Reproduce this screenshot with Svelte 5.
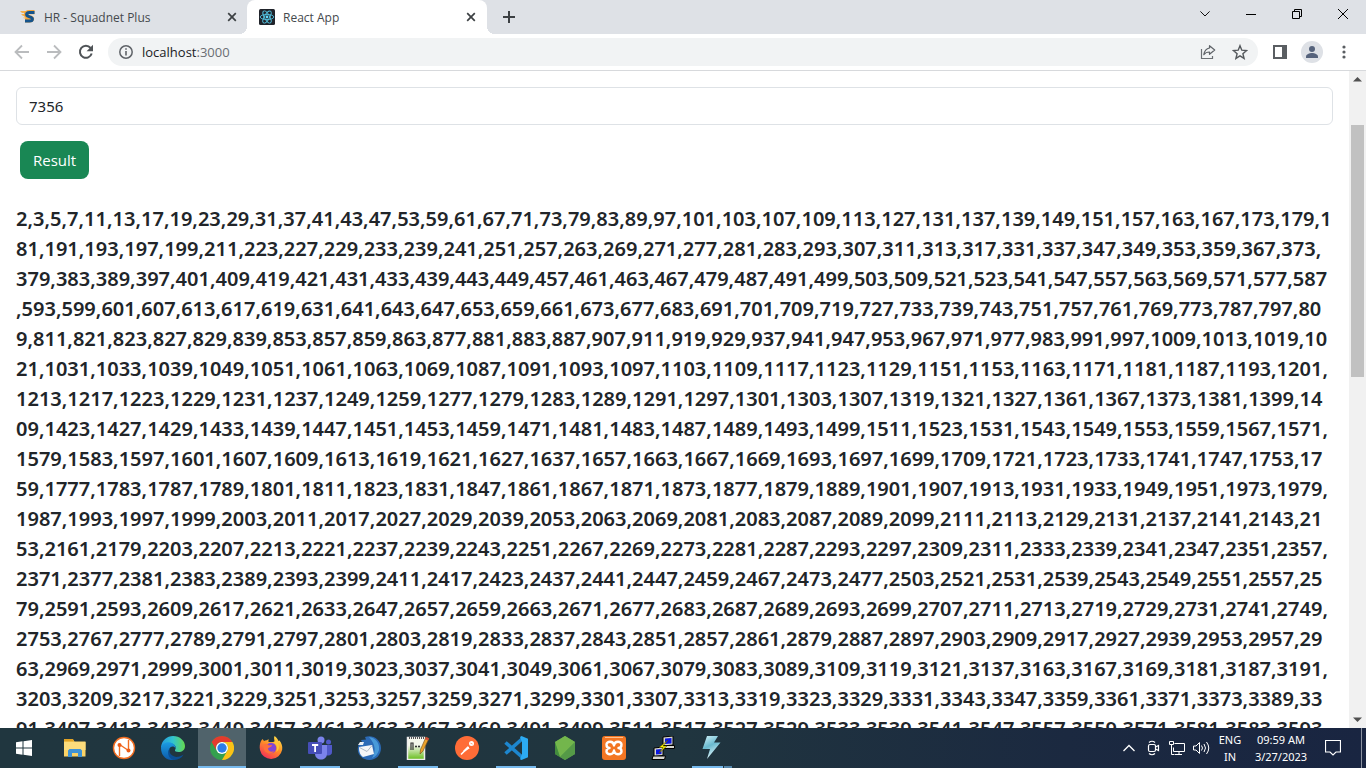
<script>
  let value = $state('7356');
  let limit = $state(7356);
  const pageSize = 503;

  function primesUpTo(max) {
    const found = [];
    for (let n = 2; n <= max; n++) {
      let prime = true;
      for (const p of found) {
        if (p * p > n) break;
        if (n % p === 0) {
          prime = false;
          break;
        }
      }
      if (prime) found.push(n);
    }
    return found;
  }

  const result = $derived(primesUpTo(limit).slice(0, pageSize).join(','));

  function submit(event) {
    event.preventDefault();
    limit = Number(value) || 0;
  }
</script>

<div class="desktop">
  <header class="tabs">
    <div class="tab">
      <svg width="16" height="16" viewBox="0 0 16 16">
        <path d="M0 2h8L6 4H2zM1 5h4v2H3z" fill="#f5b04c" />
        <path d="M3 8h3v2H4z" fill="#f7cf90" />
        <path d="M14.5 3.2H9.2C7 3.2 6 4.3 6 5.8c0 3.2 6 1.8 6 4 0 1.2-1.3 1.5-2.6 1.500H5" fill="none" stroke="#f2a33a" stroke-width="4.2" />
        <path d="M14.5 3.5H9.4C7.4 3.5 6.6 4.4 6.6 5.6c0 2.8 5.8 1.7 5.8 4.3 0 1.5-1.4 2-3 2H5" fill="none" stroke="#15548c" stroke-width="3" />
      </svg>
      <span class="title">HR - Squadnet Plus</span>
      <button class="tab-close" aria-label="Close tab">
        <svg width="10" height="10" viewBox="0 0 10 10"><path d="M1.2 1.2l7.6 7.6M8.8 1.2L1.2 8.8" stroke="#3c4043" stroke-width="1.7" /></svg>
      </button>
    </div>
    <div class="tab active">
      <svg width="16" height="16" viewBox="0 0 16 16">
        <rect width="16" height="16" rx="1.5" fill="#20232a" />
        <g fill="none" stroke="#53c1de" stroke-width=".9">
          <ellipse cx="8" cy="8" rx="6.8" ry="2.6" />
          <ellipse cx="8" cy="8" rx="6.8" ry="2.6" transform="rotate(60 8 8)" />
          <ellipse cx="8" cy="8" rx="6.8" ry="2.6" transform="rotate(120 8 8)" />
        </g>
        <circle cx="8" cy="8" r="1.4" fill="#61dafb" />
      </svg>
      <span class="title">React App</span>
      <button class="tab-close" aria-label="Close tab">
        <svg width="10" height="10" viewBox="0 0 10 10"><path d="M1.2 1.2l7.6 7.6M8.8 1.2L1.2 8.8" stroke="#3c4043" stroke-width="1.7" /></svg>
      </button>
    </div>
    <button class="new-tab" aria-label="New tab">
      <svg width="12" height="12" viewBox="0 0 12 12"><path d="M6 0v12M0 6h12" stroke="#3c4043" stroke-width="2" /></svg>
    </button>
    <div class="window-controls">
      <button aria-label="Search tabs">
        <svg width="10" height="6" viewBox="0 0 10 6"><path d="M.4.4L5 5 9.600.4" fill="none" stroke="#111" /></svg>
      </button>
      <button aria-label="Minimize">
        <svg width="10" height="10" viewBox="0 0 10 10"><path d="M0 5.500h10" stroke="#000" /></svg>
      </button>
      <button aria-label="Restore">
        <svg width="10" height="10" viewBox="0 0 10 10"><path d="M.5 2.500h7v7h-7zM2.500 2.500v-2h7v7h-2" fill="none" stroke="#000" /></svg>
      </button>
      <button aria-label="Close">
        <svg width="10" height="10" viewBox="0 0 10 10"><path d="M0 0l10 10M10 0L0 10" stroke="#000" /></svg>
      </button>
    </div>
  </header>

  <nav class="toolbar">
    <button class="tool" aria-label="Back">
      <svg width="16" height="16" viewBox="0 0 16 16"><path d="M15 8H2M8 1.500L1.500 8 8 14.500" fill="none" stroke="#babcbe" stroke-width="1.8" /></svg>
    </button>
    <button class="tool" aria-label="Forward">
      <svg width="16" height="16" viewBox="0 0 16 16"><path d="M1 8h13M8 1.500L14.500 8 8 14.500" fill="none" stroke="#babcbe" stroke-width="1.8" /></svg>
    </button>
    <button class="tool" aria-label="Reload">
      <svg width="16" height="16" viewBox="0 0 16 16">
        <path d="M13.700 9.500A6 6 0 1 1 12.600 4" fill="none" stroke="#4f5357" stroke-width="2" />
        <path d="M15 .8v6.400H8.600z" fill="#4f5357" />
      </svg>
    </button>
    <div class="omnibox">
      <svg width="14" height="14" viewBox="0 0 14 14">
        <circle cx="7" cy="7" r="6.200" fill="none" stroke="#5f6368" stroke-width="1.500" />
        <path d="M7 6v4.500M7 3.200v1.600" stroke="#5f6368" stroke-width="1.600" />
      </svg>
      <span class="address">localhost<span class="port">:3000</span></span>
      <button class="tool" aria-label="Share">
        <svg width="16" height="16" viewBox="0 0 16 16">
          <path d="M1.500 5v9.500h11V12" fill="none" stroke="#6b6f73" stroke-width="1.200" />
          <path d="M9.500 1.700L14.700 6l-5.200 4.300V8C7 8 5.200 8.700 3.800 10.700 4.300 7.500 6 4.600 9.500 4z" fill="none" stroke="#5f6368" stroke-width="1.200" stroke-linejoin="round" />
        </svg>
      </button>
      <button class="tool" aria-label="Bookmark this tab">
        <svg width="16" height="16" viewBox="0 0 16 16"><path d="M8 1.700l1.800 4.500 4.800.4-3.700 3.100 1.200 4.700L8 11.900l-4.100 2.500 1.200-4.700-3.700-3.100 4.800-.4z" fill="none" stroke="#54585c" stroke-width="1.400" /></svg>
      </button>
    </div>
    <button class="tool" aria-label="Side panel">
      <svg width="14" height="14" viewBox="0 0 14 14"><path d="M0 0h14v14H0zM2 2v10h7V2z" fill="#5a5e62" fill-rule="evenodd" /></svg>
    </button>
    <button class="tool" aria-label="Profile">
      <svg width="22" height="22" viewBox="0 0 22 22">
        <circle cx="11" cy="11" r="11" fill="#dee1e6" />
        <circle cx="11" cy="8" r="3" fill="#56637c" />
        <path d="M5 17v-1.500C5 13.200 8.500 12 11 12s6 1.200 6 3.500V17z" fill="#56637c" />
      </svg>
    </button>
    <button class="tool" aria-label="Menu">
      <svg width="4" height="14" viewBox="0 0 4 14" fill="#5a5e62"><circle cx="2" cy="2" r="1.600" /><circle cx="2" cy="7" r="1.600" /><circle cx="2" cy="12" r="1.600" /></svg>
    </button>
  </nav>

  <div class="viewport">
    <main>
      <form onsubmit={submit}>
        <input type="text" aria-label="Number" bind:value />
        <button class="result" type="submit">Result</button>
      </form>
      <p class="primes">{result}</p>
    </main>
    <div class="scrollbar">
      <svg width="9" height="5" viewBox="0 0 9 5"><path d="M0 4.500L4.500 0 9 4.500z" fill="#505050" /></svg>
      <div class="track"><div class="thumb"></div></div>
      <svg width="9" height="5" viewBox="0 0 9 5"><path d="M0 .5L4.500 5 9 .5z" fill="#505050" /></svg>
    </div>
  </div>

  <footer class="taskbar">
    <button class="start" aria-label="Start">
      <svg width="16" height="16" viewBox="0 0 16 16" fill="#fff"><path d="M0 2.200L6.500 1.300v6.200H0zM7.500 1.200L16 0v7.500H7.500zM0 8.500h6.500v6.200L0 13.800zM7.500 8.500H16V16l-8.500-1.200z" /></svg>
    </button>
    <div class="apps">
      <button aria-label="File Explorer">
        <svg width="24" height="24" viewBox="0 0 24 24">
          <path d="M1 3.500h9l1.500 2H22.500v15H1z" fill="#fbd366" />
          <path d="M1 3h9l1 2.500H1z" fill="#e2a325" />
          <path d="M1 6h21.500v8H1z" fill="#fcdc7c" />
          <path d="M5 21v-6.500L6.500 13h11l1.500 1.500V21h-4v-4H9v4z" fill="#3f93d5" />
        </svg>
      </button>
      <button aria-label="Nox">
        <svg width="24" height="24" viewBox="0 0 24 24">
          <circle cx="12" cy="12" r="10.500" fill="#fff" stroke="#f26d21" stroke-width="1.400" />
          <path d="M7.500 20V8.500l9 6V4" fill="none" stroke="#f26d21" stroke-width="1.400" />
          <circle cx="7.500" cy="9" r="2" fill="#ed5b18" /><circle cx="16.500" cy="14.500" r="2" fill="#ed5b18" />
        </svg>
      </button>
      <button aria-label="Edge">
        <svg width="24" height="24" viewBox="0 0 24 24">
          <defs>
            <linearGradient id="edge-top"><stop offset="0" stop-color="#239adf" /><stop offset=".5" stop-color="#32c4cf" /><stop offset="1" stop-color="#65d94e" /></linearGradient>
            <linearGradient id="edge-left" x2="0" y2="1"><stop stop-color="#1b9ce3" /><stop offset="1" stop-color="#0d59a8" /></linearGradient>
          </defs>
          <path d="M0 11C1 4 6 0 12 0c7 0 12 5 12 10 0 4-3 6-6.500 6-2.500 0-4-1-3.500-2 2-2.500 0-6-4-6.500C5.500 7 2 8.500 0 12z" fill="url(#edge-top)" />
          <path d="M0 12c.5-3.500 4-6 8-5.700 4.500.4 7 3.500 6.500 6.200C13 9.500 9 10 8 14c-1 4 2 8.500 6 9.800C6 25.500 0 20 0 12z" fill="url(#edge-left)" />
          <path d="M9 12c-2 6 3 9.500 8 8.800 2-.3 4-1.300 5.500-2.300-2 4-6 5.700-9.500 5.400C7 22.500 5.500 15.500 9 12z" fill="#0b4e93" />
        </svg>
      </button>
      <button class="focused" aria-label="Chrome">
        <svg width="24" height="24" viewBox="0 0 24 24">
          <circle cx="12" cy="12" r="12" fill="#34a04e" />
          <path d="M12 0a12 12 0 0 1 10.400 6H12a6 6 0 0 0-5.200 9L1.600 6A12 12 0 0 1 12 0z" fill="#e33b2e" />
          <path d="M22.400 6A12 12 0 0 1 12 24l5.200-9A6 6 0 0 0 12 6z" fill="#fbc116" />
          <circle cx="12" cy="12" r="6" fill="#fff" /><circle cx="12" cy="12" r="4.700" fill="#2b7de9" />
        </svg>
      </button>
      <button aria-label="Firefox">
        <svg width="24" height="24" viewBox="0 0 24 24">
          <defs><linearGradient id="fox" x1=".8" y1="0" x2=".2" y2="1"><stop stop-color="#ffe34a" /><stop offset=".45" stop-color="#ff9126" /><stop offset="1" stop-color="#f5275c" /></linearGradient></defs>
          <path d="M2 5l1.500-2L5 5c1-.6 2-.8 3-.7L9.500 3v3h6C15.500 3.500 14.500 2 15.500 0c2 1 3 3 4 5l1-.5c2 2.500 3.200 5.500 2.700 9A11.300 11.300 0 0 1 1 14C.3 10.500.8 7.500 2 5z" fill="url(#fox)" />
          <circle cx="12" cy="12" r="5.300" fill="#8345d5" />
          <path d="M4 9c2-2 4-1.500 6 .5L13 9c0 2-3 2.200-4 3.500 0 3 4 4 6 2.500-1 4-9 3-10-2z" fill="#ff7139" />
          <path d="M14 6c4 2 5 6 3 10 4-2 4-8 0-11z" fill="#ffc636" />
        </svg>
      </button>
      <button class="running" aria-label="Teams">
        <svg width="24" height="24" viewBox="0 0 24 24">
          <circle cx="13" cy="4" r="3.500" fill="#7b83eb" /><circle cx="20.500" cy="6" r="2.500" fill="#5059c9" />
          <path d="M17 9h7v7c0 3-3 4.500-6 3z" fill="#5059c9" />
          <path d="M7 9h12v8.500c0 8-12 8-12 0z" fill="#7b83eb" />
          <rect y="6" width="14" height="12" rx="1" fill="#464eb8" />
          <path d="M4 9h6.200M7.100 9v7" stroke="#fff" stroke-width="1.800" />
        </svg>
      </button>
      <button aria-label="Thunderbird">
        <svg width="24" height="24" viewBox="0 0 24 24">
          <path d="M8 1c7-3 16 2 16 11 0 7-5 12-11.500 12C5 24-.5 18 1 11c.5-3 2.500-4 4-5L4 4l5-.5z" fill="#2b6ab6" />
          <path d="M12 1c6 1 11 5 10 13-1 4-4 7-7 8 4-6 4-13-3-21z" fill="#499ad9" />
          <path d="M2 11l13-2 2 9-11 3C3 19 2 16 2 11z" fill="#f4f5f7" />
          <path d="M2.500 11.500l7.500 4 5-6" fill="none" stroke="#aeb8c4" />
          <path d="M1 9l2-3h4L6 9z" fill="#e9eef4" />
        </svg>
      </button>
      <button class="running" aria-label="Notepad++">
        <svg width="24" height="24" viewBox="0 0 24 24">
          <defs><linearGradient id="note" x2="0" y2="1"><stop offset=".35" stop-color="#f4f7ec" /><stop offset="1" stop-color="#66bd1b" /></linearGradient></defs>
          <path d="M1.500 1.500h17v22h-17z" fill="url(#note)" stroke="#ececec" stroke-width="1.500" />
          <path d="M3 2h15" stroke="#555" stroke-width="2" stroke-dasharray="1 1" />
          <path d="M5 14V7h2v7M9 10.500h2M12 10.500h2M10 9.500v2M13 9.500v2" fill="none" stroke="#333" stroke-width="1.200" />
          <path d="M20 1l3 1.500L17 15l-3 3 .5-4.500z" fill="#e9a22c" stroke="#754b18" stroke-width=".6" />
          <path d="M20 1l3 1.500-1 2-3-1.500z" fill="#cf4b3f" />
        </svg>
      </button>
      <button aria-label="Postman">
        <svg width="24" height="24" viewBox="0 0 24 24">
          <circle cx="12" cy="12" r="12" fill="#ff6c37" />
          <path d="M6 18.500l7-7" stroke="#fff" stroke-width="1.600" /><path d="M8 15l5-5 2 2-5 3.500z" fill="#fff" />
          <path d="M13.500 10.500l2 2" stroke="#ff6c37" /><circle cx="16.500" cy="7.500" r="2.500" fill="#fff" /><path d="M15.500 7.200l2 .8" stroke="#ff9b77" />
        </svg>
      </button>
      <button class="running" aria-label="Visual Studio Code">
        <svg width="24" height="24" viewBox="0 0 24 24">
          <path d="M1.500 6.500L18 21M1.500 17.500L18 3" stroke="#1d87cf" stroke-width="3.600" />
          <path d="M17.500 0L24 2.700v18.600L17.500 24l-1.500-.8L18 18V6l-2-5z" fill="#2cabf3" />
        </svg>
      </button>
      <button aria-label="Node.js">
        <svg width="24" height="24" viewBox="0 0 24 24">
          <path d="M12 0l10 6v12l-10 6L2 18V6z" fill="#5da548" />
          <path d="M12 0L2 6l5 15L22 6z" fill="#73b64c" /><path d="M2 6l5 15-5-3z" fill="#438c3e" /><path d="M22 6v12l-10 6-5-3z" fill="#559a47" />
        </svg>
      </button>
      <button aria-label="XAMPP">
        <svg width="24" height="24" viewBox="0 0 24 24">
          <rect width="24" height="24" rx="3" fill="#f37623" /><path d="M3 1.500h18" stroke="#ffc08c" />
          <path d="M12 9.500C11.500 4.500 4.500 5 4.500 8.500c0 2 1 3.500 3 3.500-2 0-3 1.500-3 3.500 0 3.500 7 4 7.500-1 .5 5 7.500 4.500 7.500 1 0-2-1-3.500-3-3.500 2 0 3-1.500 3-3.500 0-3.500-7-4-7.500 1z" fill="none" stroke="#fff" stroke-width="2.400" stroke-linejoin="round" />
        </svg>
      </button>
      <button aria-label="PuTTY">
        <svg width="24" height="24" viewBox="0 0 24 24">
          <g stroke="#000">
            <path d="M12 1l10-1v9l-10 1z" fill="#d8d8d0" /><path d="M14 2.500l6.500-.5v5.500l-6.500.5z" fill="#0b16e0" stroke="none" /><path d="M11 9.500h12.500v3H10.500z" fill="#d8d8d0" />
            <path d="M3 12l9-1v8.500l-9 1z" fill="#d8d8d0" /><path d="M5 13.500l5.500-.5v5l-5.500.5z" fill="#0b16e0" stroke="none" /><path d="M2 20h12.500l-1 3.500H1z" fill="#d8d8d0" />
          </g>
          <path d="M17 4l-9 7.500h4L8 17l8-7h-4z" fill="#f9f200" stroke="#4c4800" stroke-width=".5" />
        </svg>
      </button>
      <button class="running stacked" aria-label="Terminal">
        <svg width="24" height="24" viewBox="0 0 24 24">
          <defs><linearGradient id="bolt" x2=".4" y2="1"><stop stop-color="#d2f3fa" /><stop offset=".5" stop-color="#69b9cf" /><stop offset="1" stop-color="#dff6fb" /></linearGradient></defs>
          <path d="M7 0h11L14 6.500h6.500L7 23l3-10H2.500z" fill="url(#bolt)" />
        </svg>
      </button>
    </div>
    <div class="tray">
      <button aria-label="Show hidden icons">
        <svg width="12" height="8" viewBox="0 0 12 8"><path d="M.5 7L6 1.500 11.500 7" fill="none" stroke="#fff" stroke-width="1.300" /></svg>
      </button>
      <button aria-label="Meet Now">
        <svg width="14" height="16" viewBox="0 0 14 16" fill="none" stroke="#fff" stroke-width="1.200"><rect x="2.500" y="4.500" width="7" height="7" rx="1.500" /><path d="M9.500 7l3-1.500v5l-3-1.500M3 2.500Q6 0 9 2.500M3 13.500Q6 16 9 13.500" /></svg>
      </button>
      <button aria-label="Network">
        <svg width="16" height="14" viewBox="0 0 16 14" fill="none" stroke="#fff"><path d="M5.500 2.500h10v8h-11v-4M10 10.500v3M6 13.500h7M.5.500h4v3h-4zM2.500 3.500v10h3" /></svg>
      </button>
      <button aria-label="Volume">
        <svg width="17" height="14" viewBox="0 0 17 14" fill="none" stroke="#fff"><path d="M.5 5h2.500L6.500 1.500v11L3 9H.5zM8.500 4.500q2 2.500 0 5M11 3q3 4 0 8M13.500 1q4.500 6 0 12" /></svg>
      </button>
      <div class="language"><span>ENG</span><span>IN</span></div>
      <time datetime="2023-03-27T09:59"><span>09:59 AM</span><span>3/27/2023</span></time>
      <button class="notices" aria-label="Notifications">
        <svg width="16" height="16" viewBox="0 0 16 16"><path d="M.5.500h15v11.500H11L8 15l-3-3H.5z" fill="none" stroke="#fff" stroke-width="1.200" /></svg>
      </button>
      <span class="peek"></span>
    </div>
  </footer>
</div>

<style>
  :global(body) {
    margin: 0;
    overflow: hidden;
  }
  .desktop {
    display: flex;
    flex-direction: column;
    height: 100vh;
    background: #fff;
    color: #212529;
    font-family: 'Noto Sans', 'Open Sans', sans-serif;
  }
  .desktop *,
  .desktop {
    box-sizing: border-box;
  }
  button {
    display: flex;
    align-items: center;
    justify-content: center;
    border: 0;
    padding: 0;
    background: none;
    font-family: inherit;
  }
  svg {
    display: block;
    flex: none;
  }

  .tabs {
    display: flex;
    flex: none;
    height: 34px;
    padding-left: 8px;
    background: #dee1e6;
  }
  .tab {
    position: relative;
    display: flex;
    align-items: center;
    flex: 0 1 240px;
    gap: 8px;
    padding: 0 8px 0 12px;
    border-radius: 8px 8px 0 0;
    color: #45494d;
    font-family: 'Open Sans', sans-serif;
    font-size: 12px;
  }
  .active {
    margin-left: -1px;
    background: #fff;
  }
  .active::before,
  .active::after {
    content: '';
    position: absolute;
    bottom: 0;
    width: 8px;
    height: 8px;
  }
  .active::before {
    right: 100%;
    background: radial-gradient(circle at 0 0, transparent 8px, #fff 8px);
  }
  .active::after {
    left: 100%;
    background: radial-gradient(circle at 100% 0, transparent 8px, #fff 8px);
  }
  .title {
    flex: 1;
    white-space: nowrap;
  }
  .tab-close {
    width: 16px;
    height: 16px;
  }
  .new-tab {
    width: 28px;
    margin-left: 8px;
  }
  .window-controls {
    display: flex;
    margin-left: auto;
  }
  .window-controls button {
    width: 46px;
    height: 28px;
  }

  .toolbar {
    display: flex;
    flex: none;
    align-items: center;
    gap: 4px;
    height: 37px;
    padding: 0 8px;
    border-bottom: 1px solid #d7d9dc;
  }
  .tool {
    width: 28px;
    height: 28px;
  }
  .omnibox {
    display: flex;
    flex: 1;
    align-items: center;
    gap: 4px;
    height: 28px;
    margin: 0 4px;
    padding: 0 4px 0 11px;
    border-radius: 14px;
    background: #f1f3f4;
  }
  .address {
    flex: 1;
    padding-left: 5px;
    color: #202124;
    font-family: 'Open Sans', sans-serif;
    font-size: 13px;
  }
  .port {
    color: #6a6e73;
  }

  .viewport {
    display: flex;
    flex: 1;
    min-height: 0;
  }
  main {
    flex: 1;
    min-width: 0;
    padding: 16px 16px 0;
    overflow: hidden;
  }
  input {
    display: block;
    width: 100%;
    height: 38px;
    padding: 6px 12px;
    border: 1px solid #dee2e6;
    border-radius: 6px;
    color: #212529;
    font-family: inherit;
    font-size: 15px;
  }
  .result {
    height: 38px;
    margin: 16px 4px 0;
    padding: 0 13px;
    border-radius: 8px;
    background: #198754;
    color: #fff;
    font-family: 'Open Sans', sans-serif;
    font-size: 15px;
  }
  .primes {
    margin: 25px 1px 0 0;
    font-size: 20px;
    font-weight: 600;
    line-height: 30px;
    overflow-wrap: anywhere;
  }
  .scrollbar {
    display: flex;
    flex: none;
    flex-direction: column;
    align-items: center;
    gap: 6px;
    width: 17px;
    padding: 6px 0;
    background: #f1f1f1;
  }
  .track {
    flex: 1;
    width: 13px;
    padding-top: 37px;
  }
  .thumb {
    height: 43%;
    background: #c1c1c1;
  }

  .taskbar {
    display: flex;
    flex: none;
    height: 40px;
    background: linear-gradient(90deg, #20363f, #20353f 50%, #1b2940 78%, #192541);
  }
  .start {
    width: 48px;
  }
  .apps {
    display: flex;
    gap: 1px;
    padding-left: 3px;
  }
  .apps button {
    position: relative;
    width: 48px;
  }
  .focused {
    background: #50636b;
  }
  .focused::after,
  .running::after {
    content: '';
    position: absolute;
    right: 4px;
    bottom: 0;
    left: 4px;
    height: 2px;
    background: #76b9ed;
  }
  .focused::after {
    right: 0;
    left: 0;
  }
  .stacked::after {
    background: linear-gradient(90deg, #76b9ed 31px, #20353f 31px, #20353f 32px, #5587ac 32px);
  }
  .tray {
    display: flex;
    margin-left: auto;
    color: #fff;
    font-size: 11px;
  }
  .tray button {
    width: 24px;
  }
  .language,
  time {
    display: flex;
    flex-direction: column;
    align-items: center;
    justify-content: center;
    line-height: 17px;
  }
  .language {
    width: 34px;
  }
  time {
    width: 68px;
  }
  .tray .notices {
    width: 36px;
  }
  .peek {
    width: 5px;
    margin-left: 10px;
    border-left: 1px solid #8b92a0;
  }
</style>
